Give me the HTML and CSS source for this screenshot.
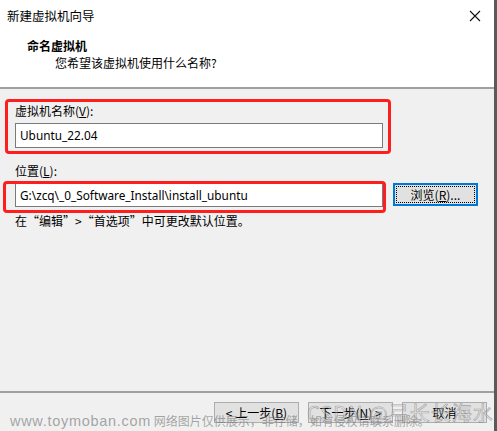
FILE: index.html
```html
<!DOCTYPE html>
<html lang="zh">
<head>
<meta charset="utf-8">
<title>新建虚拟机向导</title>
<link rel="stylesheet" href="styles.css">
</head>
<body>
<div class="win">
  <div class="header">
    <div class="titlebar">
      <span class="title">新建虚拟机向导</span>
      <svg class="close" width="12" height="12" viewBox="0 0 12 12"><path d="M1 1L11 11M11 1L1 11" stroke="#111" stroke-width="1.1" fill="none"/></svg>
    </div>
    <div class="heading">命名虚拟机</div>
    <div class="sub">您希望该虚拟机使用什么名称?</div>
  </div>
  <div class="body">
    <div class="label l1">虚拟机名称(<u>V</u>):</div>
    <div class="input in1">Ubuntu_22.04</div>
    <div class="label l2">位置(<u>L</u>):</div>
    <div class="row">
      <div class="input in2">G:\zcq\_0_Software_Install\install_ubuntu</div>
      <div class="btn browse"><span class="focus">浏览(<u>R</u>)...</span></div>
    </div>
    <div class="hint">在“编辑”&gt;“首选项”中可更改默认位置。</div>
  </div>
  <div class="footer">
    <div class="btn">&lt; 上一步(<u>B</u>)</div>
    <div class="btn">下一步(<u>N</u>) &gt;</div>
    <div class="btn">取消</div>
  </div>
  <div class="mark mark1"></div>
  <div class="mark mark2"></div>
  <div class="wm1"><span class="lat">www.toymoban.com</span> 网络图片仅供展示，非存储，如有侵权请联系删除。</div>
  <div class="wm2">CSDN @弓长长海水</div>
</div>
</body>
</html>
```

FILE: styles.css
```css
* { box-sizing: border-box; }
html, body { margin: 0; padding: 0; }
body {
  width: 497px;
  height: 431px;
  overflow: hidden;
  background: #f0f0f0;
  font-family: "Noto Sans CJK SC", "Noto Sans", sans-serif;
  font-size: 12px;
  color: #000;
}
u { text-decoration: underline; text-underline-offset: 1px; }
.win {
  position: relative;
  width: 497px;
  height: 431px;
  background: #f0f0f0;
  border-right: 3px solid #5a5a5a;
}
.header {
  height: 89px;
  background: #fff;
  border-bottom: 2px solid #a0a0a0;
}
.titlebar {
  height: 31px;
  display: flex;
  align-items: center;
  justify-content: space-between;
  padding: 0 13px 0 7px;
}
.title { font-size: 12.5px; line-height: 16px; }
.close { display: block; }
.heading {
  font-weight: bold;
  padding-left: 27px;
  line-height: 16px;
  margin-top: 7px;
}
.sub {
  padding-left: 55px;
  line-height: 16px;
  margin-top: 1px;
}
.body {
  padding-left: 15px;
}
.label { line-height: 16px; }
.l1 { margin-top: 14px; }
.l2 { margin-top: 15px; }
.input {
  height: 25px;
  width: 368px;
  background: #fff;
  border: 1px solid #7a7a7a;
  font-family: "Noto Sans", "Noto Sans CJK SC", sans-serif;
  font-size: 11.8px;
  line-height: 23px;
  padding-left: 4px;
  white-space: nowrap;
  overflow: hidden;
}
.in1 { margin-top: 4px; }
.row {
  display: flex;
  align-items: flex-start;
  margin-top: 4px;
}
.in2 { height: 24px; line-height: 22px; }
.btn {
  width: 85px;
  height: 21px;
  background: #e1e1e1;
  border: 1px solid #adadad;
  display: flex;
  align-items: center;
  justify-content: center;
  line-height: 16px;
  white-space: nowrap;
}
.browse {
  margin-left: 10px;
  height: 23px;
  border: 2px solid #0078d7;
  padding: 1px;
}
.focus {
  display: flex;
  align-items: center;
  justify-content: center;
  width: 100%;
  height: 100%;
  border: 1px dotted #000;
}
.hint { margin-top: 6px; line-height: 16px; }
.footer {
  position: absolute;
  left: 0;
  right: 0;
  top: 391px;
  height: 40px;
  border-top: 2px solid #a0a0a0;
  display: flex;
  justify-content: flex-end;
  align-items: flex-start;
  gap: 9px;
  padding: 9px 7px 0 0;
}
.mark {
  position: absolute;
  border: 3px solid #ff1e1e;
  border-radius: 4px;
}
.mark1 { left: 5px; top: 99px; width: 386px; height: 55px; }
.mark2 { left: 3px; top: 181px; width: 383px; height: 32px; }
.wm1 {
  position: absolute;
  left: 10px;
  top: 412px;
  font-size: 12px;
  line-height: 18px;
  color: rgba(110, 110, 110, 0.6);
  white-space: nowrap;
}
.wm1 .lat { font-family: "Liberation Sans", sans-serif; font-size: 14.5px; letter-spacing: 0.7px; }
.wm2 {
  position: absolute;
  left: 307px;
  top: 401px;
  font-size: 20px;
  line-height: 24px;
  color: rgba(225, 225, 225, 0.4);
  -webkit-text-stroke: 0.6px rgba(105, 105, 105, 0.55);
  white-space: nowrap;
  letter-spacing: 1px;
}
```
